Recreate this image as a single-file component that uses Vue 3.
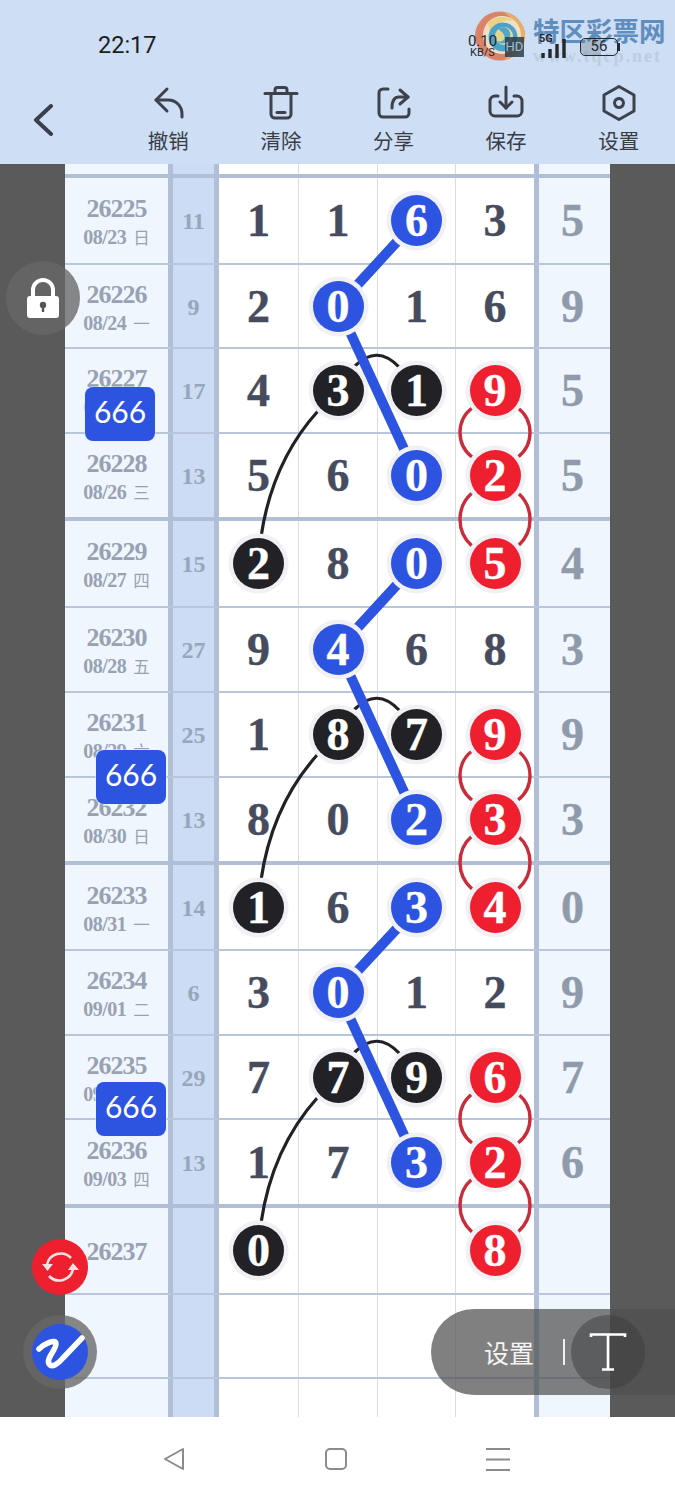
<script setup>
const tools = [
  { label: '撤销', paths: ['M17 4 L6 15 L17 26', 'M6 15 H18 C26 15 32 21 32 29 V32'] },
  { label: '清除', paths: ['M2 8.5 H34', 'M12 8 V5 a2.5 2.5 0 0 1 2.5 -2.5 H21.5 a2.5 2.5 0 0 1 2.5 2.5 V8', 'M8 9 V29 a4 4 0 0 0 4 4 H24 a4 4 0 0 0 4 -4 V9', 'M14 27.5 H22'] },
  { label: '分享', paths: ['M13 4 H8 a4 4 0 0 0 -4 4 V28 a4 4 0 0 0 4 4 H30 a4 4 0 0 0 4 -4 V24', 'M25 5 L33 12 L25 19', 'M33 12 H24 C19 12 17 17 17 23'] },
  { label: '保存', paths: ['M18 2 V23', 'M12 17 L18 23 L24 17', 'M10 11 H7 a5 5 0 0 0 -5 5 V26 a5 5 0 0 0 5 5 H29 a5 5 0 0 0 5 -5 V16 a5 5 0 0 0 -5 -5 H26'] },
  { label: '设置', paths: ['M18 1.5 L33 10 V26 L18 34.5 L3 26 V10 Z', 'M18 13.5 a4.5 4.5 0 1 0 0.01 0 Z'] }
]

// each cell: digit with an optional ball colour suffix (b, k, r)
const mk = (h, id, date, day, sum, cells, right, end = false) => ({ h, id, date, day, sum, right, end, cells: cells.split(' ').map(c => ({ d: c[0] === '-' ? '' : c[0], ball: c[1] || '' })) })

const rows = [
  mk(10, '', '', '', '', '- - - -', '', true),
  { thick: true },
  mk(87, '26225', '08/23', '日', '11', '1 1 6b 3', '5'),
  mk(84, '26226', '08/24', '一', '9', '2 0b 1 6', '9'),
  mk(85, '26227', '08/25', '二', '17', '4 3k 1k 9r', '5'),
  mk(83, '26228', '08/26', '三', '13', '5 6 0b 2r', '5', true),
  { thick: true },
  mk(87, '26229', '08/27', '四', '15', '2k 8 0b 5r', '4'),
  mk(85, '26230', '08/28', '五', '27', '9 4b 6 8', '3'),
  mk(85, '26231', '08/29', '六', '25', '1 8k 7k 9r', '9'),
  mk(83, '26232', '08/30', '日', '13', '8 0 2b 3r', '3', true),
  { thick: true },
  mk(86, '26233', '08/31', '一', '14', '1k 6 3b 4r', '0'),
  mk(85, '26234', '09/01', '二', '6', '3 0b 1 2', '9'),
  mk(84, '26235', '09/02', '三', '29', '7 7k 9k 6r', '7'),
  mk(84, '26236', '09/03', '四', '13', '1 7 3b 2r', '6', true),
  { thick: true },
  mk(87, '26237', '', '', '', '0k - - 8r', ''),
  mk(84, '', '', '', '', '- - - -', ''),
  mk(38, '', '', '', '', '- - - -', '', true)
]

const groups = [0, 343, 686]
const blueLines = [
  'M416 221 L338 306', 'M338 306 L416 475',
  'M416 564 L338 649', 'M338 649 L416 818',
  'M416 908 L338 992', 'M338 992 L416 1161'
]
const redArcs = [
  [390, 475], [475, 564], [733, 818], [818, 907], [1076, 1161], [1161, 1250]
].flatMap(([a, b]) => {
  const chord = b - a - 36
  const r = (chord * chord / 4 + 144) / 24
  return [
    `M472 ${a + 18} A${r} ${r} 0 0 0 472 ${b - 18}`,
    `M518 ${a + 18} A${r} ${r} 0 0 1 518 ${b - 18}`
  ]
})
const badges = [
  { cls: 'b1' }, { cls: 'b2' }, { cls: 'b3' }
]
</script>

<template>
  <div class="page">
    <header class="head">
      <div class="status">
        <span class="time">22:17</span>
        <div class="sys">
          <div class="speed"><span class="sp1">0.10</span><span class="sp2">KB/S</span></div>
          <span class="hd">HD</span>
          <div class="net">
            <span class="g5">5G</span>
            <svg class="bars" width="27" height="20" viewBox="0 0 27 20"><path d="M2 15 V20 M9 11 V20 M16 6 V20 M23 1 V20" stroke="#26282e" stroke-width="3.4" /></svg>
          </div>
          <div class="batt"><span class="battfill"></span><span class="battnum">56</span></div>
          <span class="batttip"></span>
        </div>
      </div>
      <div class="tools">
        <div class="back">
          <svg width="24" height="32" viewBox="0 0 24 32" fill="none" stroke="#3a3f4b" stroke-width="4" stroke-linecap="round" stroke-linejoin="round"><path d="M19 2 L4 16 L19 30" /></svg>
        </div>
        <div v-for="t in tools" :key="t.label" class="tool">
          <svg width="36" height="36" viewBox="0 0 36 36" fill="none" stroke="#3d414c" stroke-width="3" stroke-linecap="round" stroke-linejoin="round"><path v-for="p in t.paths" :key="p" :d="p" /></svg>
          <span class="tlabel">{{ t.label }}</span>
        </div>
      </div>
      <div class="mark">
        <svg class="swirl" width="52" height="50" viewBox="0 0 52 50">
          <ellipse cx="26" cy="25" rx="25" ry="24.5" fill="#dc7f62" />
          <path d="M30 1 C42 3 51 13 51 25 C51 37 42 47 30 49 C38 42 44 34 44 25 C44 16 38 7 30 1 Z" fill="#e8ae62" />
          <circle cx="28" cy="24" r="19" fill="#f2dfc6" />
          <path d="M14 12 C20 5 32 4 40 10 C30 8 20 12 16 22 Z" fill="#ecd27c" />
          <circle cx="29" cy="26" r="14.5" fill="#46a0c8" />
          <circle cx="30" cy="25" r="9" fill="#e6d68a" />
          <path d="M24 18 C32 13 39 20 35 28 C33 33 26 34 23 30 C28 32 32 28 30 24 C29 21 26 20 24 18 Z" fill="#4aa5c8" />
        </svg>
        <div class="marktext">
          <span class="mk1">特区彩票网</span>
          <span class="mk2">www.tqcp.net</span>
        </div>
      </div>
    </header>

    <main class="stage">
      <div class="side"></div>
      <div class="board">
        <template v-for="(r, i) in rows" :key="i">
          <div v-if="r.thick" class="thick"></div>
          <div v-else class="row" :class="{ plain: r.end }" :style="{ height: r.h + 'px' }">
            <div class="c-left">
              <span v-if="r.id" class="rid">{{ r.id }}</span>
              <span v-if="r.date" class="rdate">{{ r.date }}<i class="rday">{{ r.day }}</i></span>
            </div>
            <div class="sep"></div>
            <div class="c-sum">{{ r.sum }}</div>
            <div class="sep"></div>
            <div v-for="(c, j) in r.cells" :key="j" class="cell" :class="'col' + j">
              <span v-if="c.ball" class="ball" :class="c.ball">{{ c.d }}</span>
              <template v-else>{{ c.d }}</template>
            </div>
            <div class="sep"></div>
            <div class="c-right">{{ r.right }}</div>
          </div>
        </template>

        <svg class="links" width="545" height="1253" viewBox="65 164 545 1253" fill="none">
          <g v-for="g in groups" :key="g" :transform="`translate(0 ${g})`" stroke="#222226" stroke-width="3.2" stroke-linecap="round">
            <path d="M355 366 Q377 344 399 367" />
            <path d="M261 537 Q272 462 318 411" />
          </g>
          <path v-for="p in redArcs" :key="p" :d="p" stroke="#c92c3a" stroke-width="3.4" />
          <path v-for="p in blueLines" :key="p" :d="p" stroke="#2c54e0" stroke-width="10" />
        </svg>

        <div v-for="b in badges" :key="b.cls" class="badge" :class="b.cls">666</div>
      </div>
      <div class="side"></div>
    </main>

    <nav class="navbar">
      <span class="navitem"><svg width="24" height="24" viewBox="0 0 24 24" fill="none" stroke="#8b8b8d" stroke-width="2" stroke-linejoin="round"><path d="M21 2 L3 12 L21 22 Z" /></svg></span>
      <span class="navitem"><svg width="24" height="24" viewBox="0 0 24 24" fill="none" stroke="#8b8b8d" stroke-width="2"><rect x="2" y="2" width="20" height="20" rx="4" /></svg></span>
      <span class="navitem"><svg width="24" height="24" viewBox="0 0 24 24" fill="none" stroke="#8b8b8d" stroke-width="2"><path d="M0 2 H24 M0 12.5 H24 M0 23 H24" /></svg></span>
    </nav>

    <button class="float lock" type="button" aria-label="lock">
      <svg width="74" height="74" viewBox="0 0 74 74">
        <path d="M27 36 V29 a10 10 0 0 1 20 0 V36" fill="none" stroke="#fff" stroke-width="4" />
        <rect x="21" y="35" width="32" height="22" rx="3" fill="#fff" />
        <circle cx="37" cy="44" r="3.2" fill="#555" />
        <rect x="35.8" y="45" width="2.4" height="6" fill="#555" />
      </svg>
    </button>
    <button class="float refresh" type="button" aria-label="refresh">
      <svg width="56" height="56" viewBox="0 0 56 56" fill="none">
        <path d="M39 19 A14 14 0 0 0 15 26" stroke="#fbe3e4" stroke-width="2.6" />
        <path d="M17 37 A14 14 0 0 0 41 30" stroke="#fbe3e4" stroke-width="2.6" />
        <path d="M10 25 H21 L15.5 32 Z M36 31 H47 L41 24 Z" fill="#fbe3e4" />
      </svg>
    </button>
    <div class="float logo">
      <svg width="56" height="56" viewBox="0 0 56 56" fill="none"><circle cx="28" cy="28" r="28" fill="#2c54e0" /><path d="M7 25 C12 20 24 14 24 20 C24 26 14 34 17 40 C20 44 26 40 31 34 L50 14" stroke="#fff" stroke-width="5.5" stroke-linecap="round" stroke-linejoin="round" /></svg>
    </div>
    <div class="pill">
      <span class="pilltext">设置</span>
      <span class="pillbar"></span>
      <span class="tbtn"><svg width="40" height="42" viewBox="0 0 40 42" fill="none" stroke="#fff" stroke-width="2.6"><path d="M3 6 V3.5 H37 V6 M20 3.5 V38 M14 38.5 H26" /></svg></span>
    </div>
  </div>
</template>

<style scoped>
.page {
  position: relative;
  width: 675px;
  height: 1500px;
  overflow: hidden;
  background: #fff;
  font-family: "Liberation Serif", "Noto Sans CJK SC", serif;
}
.head {
  position: relative;
  height: 164px;
  background: #cddef5;
  font-family: "Noto Sans CJK SC", "Noto Sans", sans-serif;
}
.status {
  height: 85px;
  padding-top: 5px;
  box-sizing: border-box;
  display: flex;
  align-items: center;
  padding-left: 98px;
  padding-right: 55px;
}
.time {
  font-family: Roboto, sans-serif;
  font-size: 23.5px;
  color: #1c1d20;
}
.sys {
  position: relative;
  z-index: 1;
  margin-left: auto;
  margin-top: 4px;
  display: flex;
  align-items: center;
  gap: 8px;
  height: 30px;
  font-family: Roboto, sans-serif;
  color: #26282e;
}
.speed {
  display: flex;
  flex-direction: column;
  align-items: center;
  line-height: 12px;
  width: 29px;
}
.sp1 { font-size: 15px; }
.sp2 { font-size: 11px; }
.hd {
  width: 19px;
  height: 20px;
  background: rgba(45, 62, 78, .85);
  color: rgba(190, 220, 235, .8);
  font-size: 13px;
  line-height: 20px;
  text-align: center;
}
.net {
  position: relative;
  margin-left: 9px;
  width: 27px;
  height: 22px;
}
.g5 {
  position: absolute;
  left: -2px;
  top: -3px;
  font-size: 11px;
  line-height: 12px;
  font-weight: 700;
}
.bars { position: absolute; left: 0; top: 2px; }
.batt {
  position: relative;
  margin-left: 4px;
  width: 38px;
  height: 18px;
  border: 1.4px solid #26282e;
  border-radius: 5px;
  box-sizing: border-box;
  overflow: hidden;
  text-align: center;
}
.battfill {
  position: absolute;
  left: 0;
  top: 0;
  bottom: 0;
  width: 56%;
  background: rgba(110, 120, 135, .35);
}
.battnum {
  position: relative;
  font-size: 15px;
  line-height: 15px;
  display: block;
}
.batttip {
  width: 2px;
  height: 8px;
  margin-left: -8px;
  background: #26282e;
}
.tools {
  display: flex;
  height: 79px;
}
.back {
  width: 112px;
  box-sizing: border-box;
  padding: 19px 0 0 32px;
}
.back svg { display: block; }
.tool {
  flex: 1;
  display: flex;
  flex-direction: column;
  align-items: center;
}
.tool svg { display: block; }
.tlabel {
  margin-top: 6px;
  font-size: 20.5px;
  line-height: 26px;
  color: #3a3d45;
}
.mark {
  position: absolute;
  left: 474px;
  top: 11px;
  display: flex;
  gap: 7px;
}
.swirl { opacity: .95; }
.marktext {
  display: flex;
  flex-direction: column;
}
.mk1 {
  margin-top: 3px;
  font-size: 26.5px;
  line-height: 32px;
  font-weight: 700;
  color: #5f8dbd;
  white-space: nowrap;
}
.mk2 {
  margin-top: 1px;
  font-family: "Liberation Serif", serif;
  font-size: 18px;
  line-height: 18px;
  font-weight: 700;
  letter-spacing: 2px;
  color: #bdcde0;
  white-space: nowrap;
}
.stage {
  display: flex;
  height: 1253px;
}
.side {
  flex: 1;
  background: #5a5a5a;
}
.board {
  position: relative;
  width: 545px;
  background: #fff;
}
.thick {
  height: 4px;
  background: #b0bed6;
}
.row {
  display: grid;
  grid-template-columns: 103px 5px 41px 5px 80px 79px 78px 78px 5px 71px;
  box-sizing: border-box;
  border-bottom: 2px solid #b9c5da;
}
.row.plain { border-bottom: 0; }
.c-left {
  background: #f0f6fe;
  box-sizing: border-box;
  padding-top: 3px;
  display: flex;
  flex-direction: column;
  align-items: center;
  justify-content: center;
  color: #98a2b2;
  font-weight: 700;
}
.rid {
  font-size: 26px;
  line-height: 30px;
  letter-spacing: -1px;
}
.rdate {
  display: flex;
  align-items: center;
  font-size: 20px;
  line-height: 26px;
  letter-spacing: -.5px;
}
.rday {
  margin-left: 7px;
  font-family: "Noto Sans CJK SC", sans-serif;
  font-style: normal;
  font-weight: 400;
  font-size: 16.5px;
  letter-spacing: 0;
}
.sep { background: #b0bed6; }
.c-sum {
  background: #cbdcf4;
  box-sizing: border-box;
  padding-top: 2px;
  display: flex;
  align-items: center;
  justify-content: center;
  font-size: 24px;
  font-weight: 700;
  color: #98a6ba;
}
.cell {
  display: flex;
  align-items: center;
  justify-content: center;
  font-size: 46px;
  font-weight: 700;
  color: #464c5e;
  border-right: 1px solid #d7dde8;
  -webkit-text-stroke: .4px currentColor;
}
.col3 { border-right: 0; }
.c-right {
  background: #f0f6fe;
  box-sizing: border-box;
  padding-right: 4px;
  display: flex;
  align-items: center;
  justify-content: center;
  font-size: 46px;
  font-weight: 700;
  color: #8f9bab;
  -webkit-text-stroke: .4px currentColor;
}
.ball {
  position: relative;
  z-index: 2;
  width: 51px;
  height: 51px;
  border-radius: 50%;
  display: flex;
  align-items: center;
  justify-content: center;
  color: #fff;
  box-shadow: 0 0 0 4.5px #f1f1f5;
}
.b { background: #2c54e0; }
.k { background: #222226; }
.r { background: #ee1f2f; }
.links {
  position: absolute;
  left: 0;
  top: 0;
  z-index: 1;
  pointer-events: none;
}
.badge {
  position: absolute;
  z-index: 3;
  width: 70px;
  height: 54px;
  border-radius: 8px;
  background: #2c54e0;
  color: #fff;
  font-family: Lato, sans-serif;
  font-size: 30px;
  line-height: 49px;
  text-align: center;
  box-shadow: 0 0 0 1px rgba(235, 240, 255, .5);
}
.b1 { left: 20px; top: 223px; }
.b2 { left: 31px; top: 586px; }
.b3 { left: 31px; top: 918px; }
.navbar {
  height: 83px;
  display: flex;
  justify-content: center;
  align-items: center;
  padding-right: 4px;
}
.navitem {
  width: 162px;
  display: flex;
  justify-content: center;
}
.navitem svg { display: block; }
.float {
  position: absolute;
  z-index: 5;
  padding: 0;
  border: 0;
  border-radius: 50%;
  display: block;
}
.float svg { display: block; }
.lock {
  left: 6px;
  top: 261px;
  width: 74px;
  height: 74px;
  background: rgba(103, 103, 103, .78);
}
.refresh {
  left: 32px;
  top: 1239px;
  width: 56px;
  height: 56px;
  background: #ee1f2f;
}
.logo {
  left: 23px;
  top: 1315px;
  width: 74px;
  height: 74px;
  padding: 9px;
  box-sizing: border-box;
  background: rgba(103, 103, 103, .78);
}
.pill {
  position: absolute;
  z-index: 5;
  left: 431px;
  top: 1309px;
  width: 244px;
  height: 86px;
  border-radius: 43px 0 0 43px;
  background: rgba(79, 79, 79, .72);
  display: flex;
  align-items: center;
  padding-left: 53px;
  box-sizing: border-box;
  font-family: "Noto Sans CJK SC", sans-serif;
}
.pilltext {
  font-size: 25px;
  color: #f4f4f4;
  line-height: 30px;
}
.pillbar {
  width: 2px;
  height: 26px;
  margin-left: 29px;
  background: #f0f0f0;
}
.tbtn {
  width: 74px;
  height: 74px;
  margin-left: 6px;
  border-radius: 50%;
  background: rgba(60, 60, 60, .5);
  display: flex;
  align-items: center;
  justify-content: center;
}
</style>

<style>
html, body { margin: 0; padding: 0; background: #fff; }
</style>
